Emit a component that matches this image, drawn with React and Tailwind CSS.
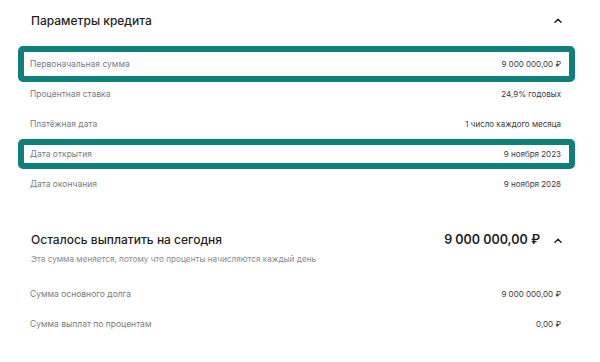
import React from 'react';

const Chevron = () => (
  <svg width="8" height="5" viewBox="0 0 8 5" fill="none" className="shrink-0">
    <path d="M1 4.2L4 1.2L7 4.2" stroke="#222" strokeWidth="1.5" strokeLinecap="round" strokeLinejoin="round" />
  </svg>
);

const Row = ({ label, value, active, tall }) => (
  <div
    className={`flex items-center justify-between border-[6px] rounded-[5px] pl-[6px] pr-[8px] ${
      active ? 'border-[#0f7f7c]' : 'border-transparent'
    } ${tall ? 'h-[36px] -my-[3px]' : 'h-[30px]'}`}
  >
    <span className="text-[8.5px] text-[#7b7b7e]">{label}</span>
    <span className="text-[8px] text-[#3a3a3d]">{value}</span>
  </div>
);

const App = () => {
  return (
    <div className="w-[600px] h-[362px] bg-white overflow-hidden font-['Inter','Liberation_Sans',sans-serif]">
      {/* Параметры кредита */}
      <div className="flex items-start justify-between pl-[31px] pr-[38px] pt-[12px] h-[49px]">
        <h2 className="text-[12px] leading-[18px] font-medium text-[#1f1f22]">Параметры кредита</h2>
        <div className="pt-[6px]">
          <Chevron />
        </div>
      </div>

      <div className="flex flex-col pl-[18px] pr-[25px]">
        <Row label="Первоначальная сумма" value="9 000 000,00 ₽" active tall />
        <Row label="Процентная ставка" value="24,9% годовых" />
        <Row label="Платёжная дата" value="1 число каждого месяца" />
        <Row label="Дата открытия" value="9 ноября 2023" active />
        <Row label="Дата окончания" value="9 ноября 2028" />
      </div>

      {/* Осталось выплатить */}
      <div className="mt-[31px] pl-[31px] pr-[38px]">
        <div className="flex items-center justify-between h-[20px]">
          <h2 className="text-[12px] leading-[20px] font-medium text-[#1f1f22]">Осталось выплатить на сегодня</h2>
          <div className="flex items-center gap-[14px]">
            <span className="text-[12.5px] font-semibold text-[#1f1f22]">9 000 000,00 ₽</span>
            <Chevron />
          </div>
        </div>
        <p className="mt-[2px] text-[8.2px] leading-[14px] text-[#8a8a8d]">
          Эта сумма меняется, потому что проценты начисляются каждый день
        </p>
      </div>

      <div className="flex flex-col mt-[13px] pl-[18px] pr-[25px]">
        <Row label="Сумма основного долга" value="9 000 000,00 ₽" />
        <Row label="Сумма выплат по процентам" value="0,00 ₽" />
      </div>
    </div>
  );
};

export default App;
